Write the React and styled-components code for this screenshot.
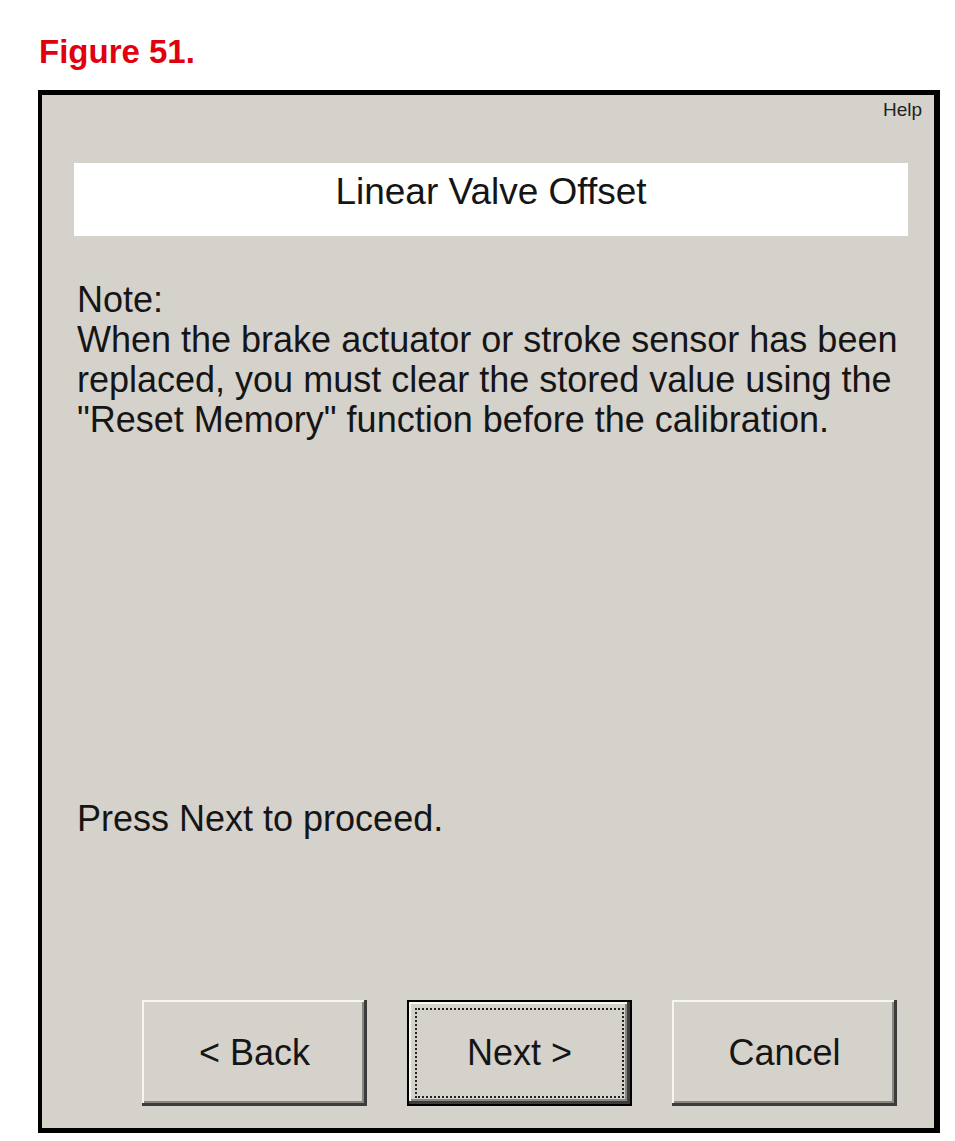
import React from "react";
import styled, { createGlobalStyle } from "styled-components";

const GlobalStyle = createGlobalStyle`
  html, body {
    margin: 0;
    padding: 0;
    background: #ffffff;
  }
  body {
    font-family: "Liberation Sans", Arial, sans-serif;
    color: #151515;
  }
`;

const Page = styled.div`
  width: 955px;
  min-height: 1141px;
  padding: 33px 0 0 38px;
  box-sizing: border-box;
`;

const Caption = styled.h1`
  margin: 0 0 19px 1px;
  font-size: 33px;
  font-weight: 700;
  line-height: 38px;
  color: #e10010;
`;

const Dialog = styled.div`
  width: 902px;
  height: 1043px;
  box-sizing: border-box;
  border-style: solid;
  border-color: #000;
  border-width: 5px 6px 5px 4px;
  background: #d5d1cb;
  display: flex;
  flex-direction: column;
`;

const HelpBar = styled.div`
  display: flex;
  justify-content: flex-end;
  padding: 4px 12px 0 0;
  font-size: 19px;
  line-height: 22px;
  color: #222;
`;

const TitleBox = styled.div`
  margin: 42px 26px 0 32px;
  height: 73px;
  box-sizing: border-box;
  padding-top: 9px;
  background: #ffffff;
  text-align: center;
  font-size: 37px;
  line-height: 40px;
`;

const Body = styled.div`
  margin-top: 44px;
  padding-left: 35px;
  font-size: 36px;
  line-height: 40px;
  white-space: nowrap;
`;

const Line = styled.div``;

const Prompt = styled(Body)`
  margin-top: 359px;
`;

const ButtonRow = styled.div`
  margin-top: auto;
  padding: 0 0 22px 100px;
  display: flex;
  gap: 40px;
`;

const DialogButton = styled.button`
  position: relative;
  width: 225px;
  height: 106px;
  padding: 0;
  background: #d5d1cb;
  font-family: "Liberation Sans", Arial, sans-serif;
  font-size: 36px;
  color: #151515;
  cursor: pointer;
  border: ${(p) => (p.$default ? "2px solid #000" : "none")};
  box-shadow: inset -3px -3px 0 #3c3c3c, inset 2px 2px 0 #f6f5f2,
    inset -5px -5px 0 #8a8783;

  &::after {
    content: "";
    display: ${(p) => (p.$default ? "block" : "none")};
    position: absolute;
    inset: 6px;
    border: 2px dotted #222;
  }
`;

export default function App() {
  return (
    <Page>
      <GlobalStyle />
      <Caption>Figure 51.</Caption>
      <Dialog>
        <HelpBar>Help</HelpBar>
        <TitleBox>Linear Valve Offset</TitleBox>
        <Body>
          <Line>Note:</Line>
          <Line>When the brake actuator or stroke sensor has been</Line>
          <Line>replaced, you must clear the stored value using the</Line>
          <Line>"Reset Memory" function before the calibration.</Line>
        </Body>
        <Prompt>Press Next to proceed.</Prompt>
        <ButtonRow>
          <DialogButton>&lt; Back</DialogButton>
          <DialogButton $default>Next &gt;</DialogButton>
          <DialogButton>Cancel</DialogButton>
        </ButtonRow>
      </Dialog>
    </Page>
  );
}
